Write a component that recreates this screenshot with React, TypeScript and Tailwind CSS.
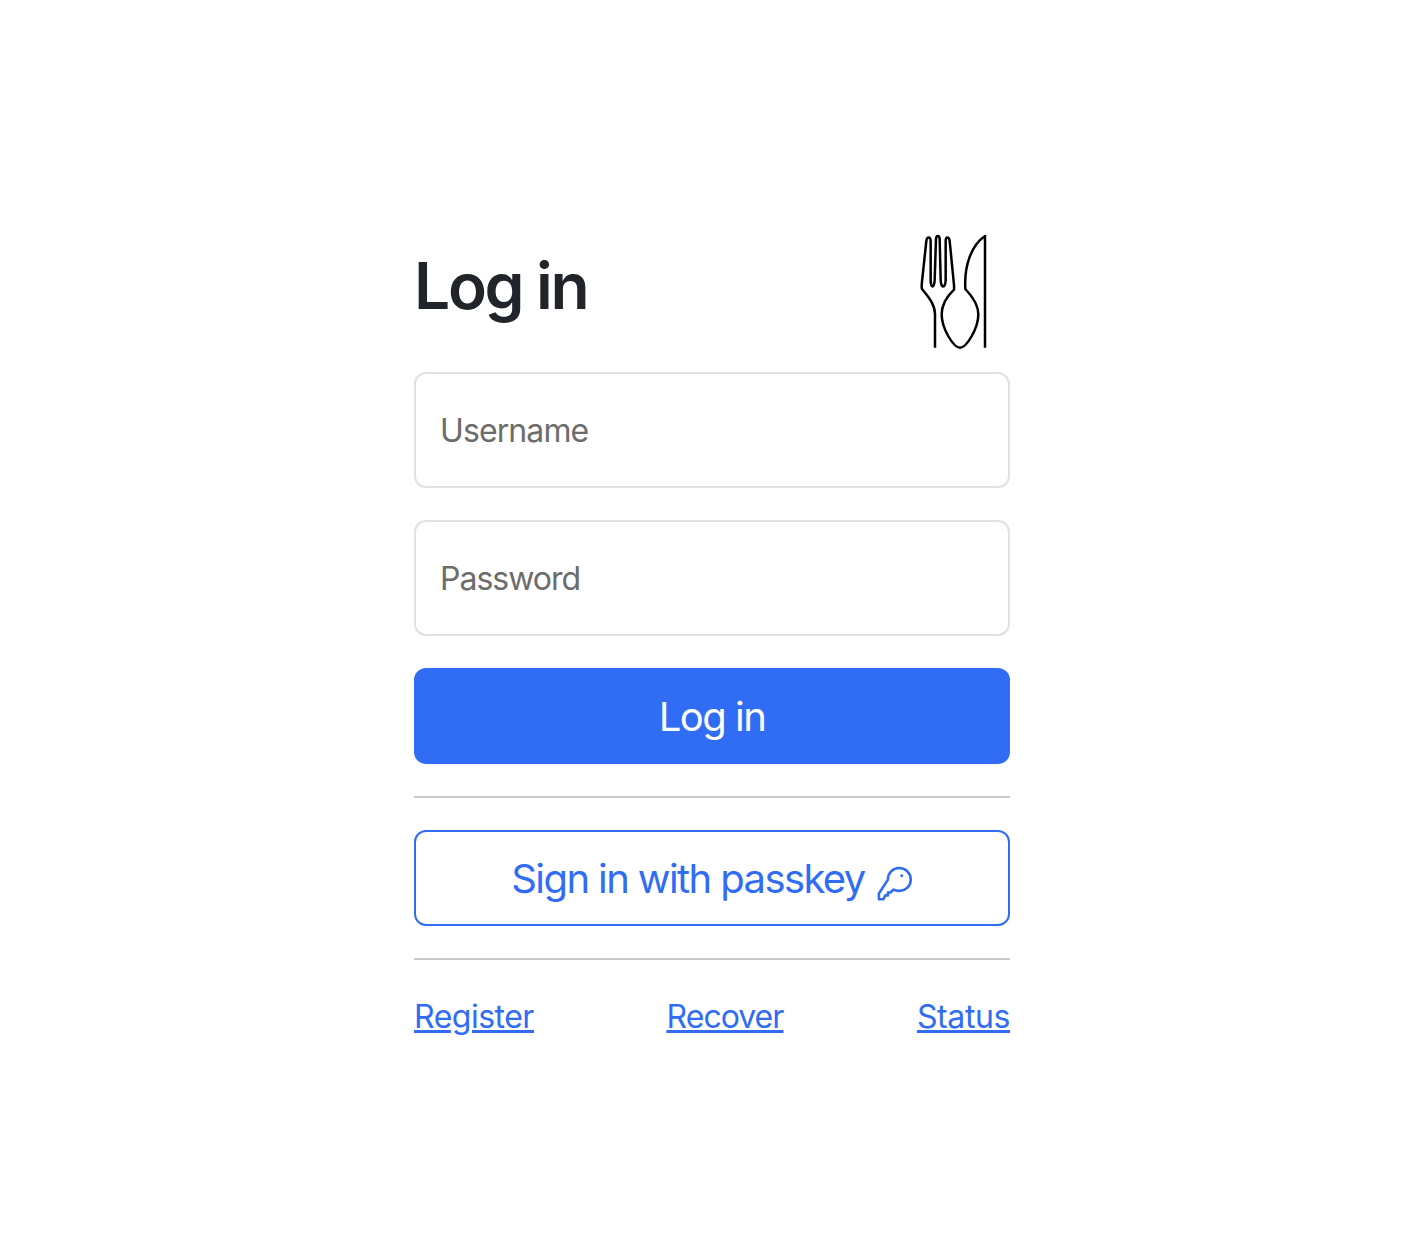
function CutleryIcon() {
    return (
        <svg viewBox="54 27 210 348" className="w-[70px] h-[116px] mr-[22px]" fill="none" stroke="#000" strokeWidth="7.5" strokeLinejoin="round">
            <path d="M105 368V268C105 235 80 210 66 192C64 188 65 180 66 170L79 48C81 34 91 34 92 48L92 165C92 192 103 190 104 165L108 42C109 30 118 30 119 42L122 165C123 190 136 192 137 165L137 48C137 34 147 34 149 48L161 170C162 180 163 188 162 194C140 215 125 240 125 268C125 310 160 368 180 368C200 368 235 310 235 268C235 240 215 212 196 192C192 120 215 60 255 33V368" />
        </svg>
    );
}

function KeyIcon() {
    return (
        <svg viewBox="46 42 112 110" className="w-[36px] h-[37px] mt-2 shrink-0" fill="none" stroke="currentColor" strokeWidth="8" strokeLinejoin="round">
            <path d="M80 85C80 65 95 49 115 49C135 49 151 65 151 85C151 105 135 120 115 120C108 120 103 119 97 116L88 125H80V134H72L66 146H52V128Z" />
            <circle cx="123" cy="73" r="4.5" fill="currentColor" stroke="none" />
        </svg>
    );
}

export default function App() {
    const inputClass = "w-full h-[116px] px-6 border-2 border-[#dee2e6] rounded-xl text-[32px] text-[#212529] placeholder:text-[#6c6c6c] outline-none";

    return (
        <div className="min-h-[1244px] bg-white flex justify-center pt-[234px] pr-px font-['Inter',sans-serif]">
            <form className="w-[596px] flex flex-col">
                <div className="flex items-center justify-between mb-[22px]">
                    <h1 className="text-[64px] leading-none font-[580] text-[#212529] tracking-[-2.3px] -mt-3">Log in</h1>
                    <CutleryIcon />
                </div>
                <input className={`${inputClass} tracking-[-0.9px]`} placeholder="Username" />
                <input className={`${inputClass} mt-8 tracking-[-1px]`} placeholder="Password" />
                <button type="button" className="mt-8 h-24 pt-0.5 rounded-xl bg-[#316cf4] text-white text-[40px] tracking-[-1.5px]">Log in</button>
                <hr className="mt-8 border-t-2 border-[#c9c9c9]" />
                <button type="button" className="mt-8 h-24 pt-0.5 rounded-xl border-2 border-[#316cf4] text-[#316cf4] text-[40px] tracking-[-1.6px] flex items-center justify-center gap-3">
                    Sign in with passkey
                    <KeyIcon />
                </button>
                <hr className="mt-8 border-t-2 border-[#c9c9c9]" />
                <div className="mt-[33px] flex justify-between text-[32px] text-[#316cf4] underline">
                    <a href="#" className="tracking-[-0.5px]">Register</a>
                    <a href="#" className="tracking-[-1px] -ml-px">Recover</a>
                    <a href="#" className="tracking-[-0.4px]">Status</a>
                </div>
            </form>
        </div>
    );
}
